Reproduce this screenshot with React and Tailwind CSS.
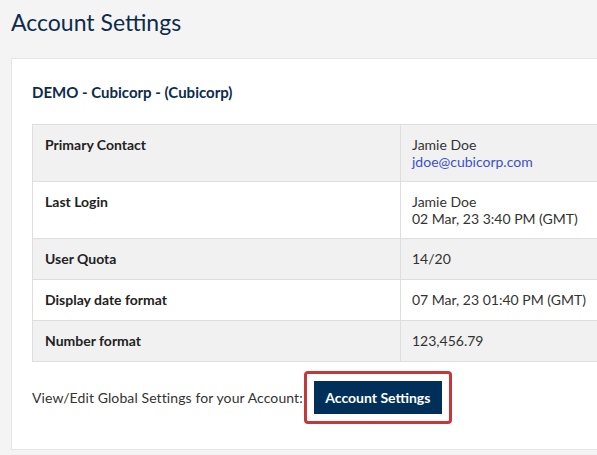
export default function App() {
  const rows = [
    { label: 'Primary Contact', lines: ['Jamie Doe'], link: 'jdoe@cubicorp.com', shade: true },
    { label: 'Last Login', lines: ['Jamie Doe', '02 Mar, 23 3:40 PM (GMT)'], shade: false },
    { label: 'User Quota', lines: ['14/20'], shade: true },
    { label: 'Display date format', lines: ['07 Mar, 23 01:40 PM (GMT)'], shade: false },
    { label: 'Number format', lines: ['123,456.79'], shade: true },
  ]

  return (
    <div className="w-[597px] h-[455px] overflow-hidden bg-[#f4f4f4] text-[#333] font-['Lato',sans-serif]">
      <h1 className="pl-[11px] pt-[7px] h-[58px] text-[23px] leading-[30px] text-[#0d2b4b]">Account Settings</h1>

      <div className="ml-[11px] w-[640px] bg-white border border-[#e6e6e6] pl-[20px] pt-[23px] pb-[25px]">
        <h2 className="text-[15px] font-bold leading-[20px] text-[#0d2b4b]">DEMO - Cubicorp - (Cubicorp)</h2>

        <table className="mt-[22px] w-[620px] border-collapse text-[14px] leading-[17px]">
          <tbody>
            {rows.map((r) => {
              const pad = r.lines.length + (r.link ? 1 : 0) > 1 ? 'pt-[11px] pb-[11px]' : 'pt-[11px] pb-[12px]'
              return (
                <tr key={r.label} className={r.shade ? 'bg-[#f1f1f1]' : 'bg-white'}>
                  <td className={`w-[368px] border border-[#dedede] align-top pl-[12px] font-bold text-[#222] ${pad}`}>
                    {r.label}
                  </td>
                  <td className={`border border-[#dedede] align-top pl-[11px] ${pad}`}>
                    {r.lines.map((l) => (
                      <div key={l}>{l}</div>
                    ))}
                    {r.link && <div className="text-[#3b4fcf]">{r.link}</div>}
                  </td>
                </tr>
              )
            })}
          </tbody>
        </table>

        <div className="mt-[9px] flex items-center text-[14px]">
          <span className="tracking-[0.1px]">View/Edit Global Settings for your Account:</span>
          <span className="ml-[1px] border-[3px] border-[#c4373a] rounded-[4px] p-[7px]">
            <button className="w-[128px] h-[33px] bg-[#00305a] text-white font-bold text-[14px]">
              Account Settings
            </button>
          </span>
        </div>
      </div>
    </div>
  )
}
